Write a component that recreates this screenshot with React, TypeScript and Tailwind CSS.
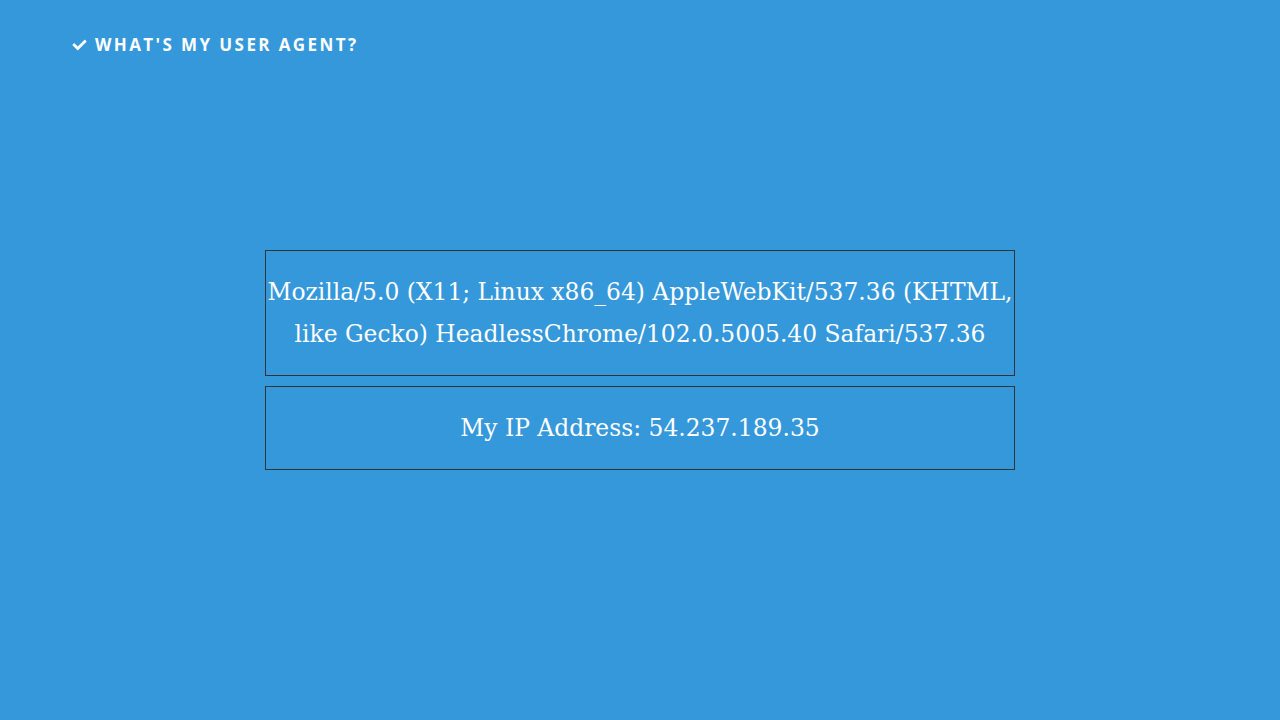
import * as React from "react"

function CheckIcon() {
  return (
    <svg viewBox="0 0 512 512" className="h-[14px] w-[17px] fill-white" aria-hidden>
      <path d="M173.9 439.4l-166.4-166.4c-10-10-10-26.2 0-36.2l36.2-36.2c10-10 26.2-10 36.2 0L192 312.7 432.1 72.6c10-10 26.2-10 36.2 0l36.2 36.2c10 10 10 26.2 0 36.2l-294.4 294.4c-10 10-26.2 10-36.2 0z" />
    </svg>
  )
}

export default function App() {
  const ua = "Mozilla/5.0 (X11; Linux x86_64) AppleWebKit/537.36 (KHTML, like Gecko) HeadlessChrome/102.0.5005.40 Safari/537.36"
  return (
    <div className="min-h-screen flex flex-col bg-[#3598db] text-white">
      <header className="h-[90px] flex items-center px-[71px]">
        <div className="flex items-center gap-[7px] font-['Open_Sans',sans-serif] font-bold text-[17px] tracking-[2.4px] uppercase">
          <CheckIcon />
          <span>What's my user agent?</span>
        </div>
      </header>
      <main className="flex-1 flex flex-col items-center justify-center pb-[90px]">
        <div className="w-[750px] flex flex-col gap-[10px] font-['DejaVu_Serif',serif] text-[23.4px] leading-[42px] text-center">
          <div className="border border-[#333] py-[20px]">{ua}</div>
          <div className="border border-[#333] py-[20px]">My IP Address: 54.237.189.35</div>
        </div>
      </main>
    </div>
  )
}
